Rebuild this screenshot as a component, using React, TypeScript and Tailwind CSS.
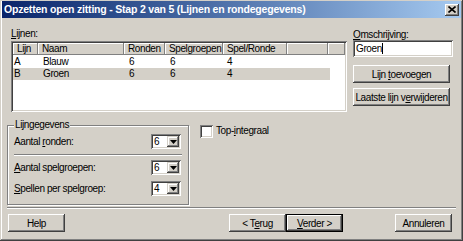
import React from 'react';

const font = { fontFamily: '"Liberation Sans", Arial, sans-serif', letterSpacing: '-0.4px' };

const raised =
  'bg-[#d4d0c8] shadow-[inset_-1px_-1px_0_#404040,inset_1px_1px_0_#ffffff,inset_-2px_-2px_0_#808080,inset_2px_2px_0_#d4d0c8]';
const sunken =
  'bg-white shadow-[inset_1px_1px_0_#808080,inset_-1px_-1px_0_#ffffff,inset_2px_2px_0_#404040,inset_-2px_-2px_0_#d4d0c8]';

function Btn({ label, u, className = '', def = false }: { label: string; u?: number; className?: string; def?: boolean }) {
  const parts =
    u === undefined ? [label] : [label.slice(0, u), label.slice(u, u + 1), label.slice(u + 1)];
  return (
    <div
      className={`flex items-center justify-center h-[18px] text-[10px] text-black whitespace-nowrap ${
        def
          ? 'bg-[#d4d0c8] shadow-[inset_0_0_0_1px_#000000,inset_-2px_-2px_0_#404040,inset_2px_2px_0_#ffffff,inset_-3px_-3px_0_#808080]'
          : raised
      } ${className}`}
    >
      {u === undefined ? (
        label
      ) : (
        <span>
          {parts[0]}
          <span className="underline">{parts[1]}</span>
          {parts[2]}
        </span>
      )}
    </div>
  );
}

function Combo({ value }: { value: string }) {
  return (
    <div className={`flex w-[30px] h-[15px] p-[2px] ${sunken}`}>
      <div className="flex-1 text-[10px] leading-[11px] pl-[1px]">{value}</div>
      <div className="w-[12px] h-[11px] flex items-center justify-center bg-[#d4d0c8] shadow-[inset_-1px_-1px_0_#404040,inset_1px_1px_0_#d4d0c8,inset_-2px_-2px_0_#808080,inset_2px_2px_0_#ffffff]">
        <svg width="7" height="4" viewBox="0 0 7 4">
          <path d="M0 0h7L3.5 4z" fill="#000" />
        </svg>
      </div>
    </div>
  );
}

const cols = [
  { name: 'Lijn', w: 25 },
  { name: 'Naam', w: 86 },
  { name: 'Ronden', w: 41 },
  { name: 'Spelgroepen', w: 58 },
  { name: 'Spel/Ronde', w: 64 },
  { name: '', w: 41 },
];

const rows = [
  { id: 'A', naam: 'Blauw', ronden: '6', groepen: '6', spel: '4', sel: false },
  { id: 'B', naam: 'Groen', ronden: '6', groepen: '6', spel: '4', sel: true },
];

export default function App() {
  return (
    <div
      style={font}
      className="w-[463px] h-[241px] bg-[#d4d0c8] text-black text-[10px] flex flex-col px-[2px] pt-[1px] shadow-[inset_-1px_-1px_0_#404040,inset_1px_1px_0_#d4d0c8,inset_-2px_-2px_0_#808080,inset_2px_2px_0_#ffffff] overflow-hidden"
    >
      {/* title bar */}
      <div className="h-[17px] flex items-center justify-between bg-gradient-to-r from-[#0a246a] to-[#a6caf0] pl-[2px] pr-[2px]">
        <span className="text-white font-bold text-[10.5px] tracking-[-0.2px]">
          Opzetten open zitting - Stap 2 van 5 (Lijnen en rondegegevens)
        </span>
        <div className={`w-[14px] h-[12px] flex items-center justify-center ${raised}`}>
          <svg width="8" height="7" viewBox="0 0 8 7">
            <path d="M0.5 0.5l7 6M7.5 0.5l-7 6" stroke="#000" strokeWidth="1.6" />
          </svg>
        </div>
      </div>

      {/* top row */}
      <div className="flex mt-[10px]">
        <div className="ml-[9px] w-[336px] flex flex-col">
          <div className="h-[13px] leading-[11px]">
            <span className="underline">L</span>ijnen:
          </div>
          <div className={`h-[71px] p-[2px] ${sunken}`}>
            <div className="flex h-[12px]">
              {cols.map((c, i) => (
                <div
                  key={i}
                  style={{ width: c.w }}
                  className="pl-[4px] leading-[11px] whitespace-nowrap overflow-hidden bg-[#d4d0c8] shadow-[inset_-1px_-1px_0_#808080,inset_1px_1px_0_#ffffff]"
                >
                  {c.name}
                </div>
              ))}
              <div className="flex-1 bg-[#d4d0c8] shadow-[inset_-1px_-1px_0_#808080,inset_1px_1px_0_#ffffff]" />
            </div>
            <div className="mt-[1px]">
              {rows.map((r) => (
                <div key={r.id} className={`flex h-[12px] leading-[12px] w-[317px] ${r.sel ? 'bg-[#d4d0c8]' : ''}`}>
                  <div style={{ width: cols[0].w }} className="pl-[1px]">{r.id}</div>
                  <div style={{ width: cols[1].w }} className="pl-[5px]">{r.naam}</div>
                  <div style={{ width: cols[2].w }} className="pl-[5px]">{r.ronden}</div>
                  <div style={{ width: cols[3].w }} className="pl-[5px]">{r.groepen}</div>
                  <div style={{ width: cols[4].w }} className="pl-[4px]">{r.spel}</div>
                </div>
              ))}
            </div>
          </div>
        </div>

        <div className="ml-[6px] w-[100px] flex flex-col">
          <div className="h-[12px] leading-[13px]">
            <span className="underline">O</span>mschrijving:
          </div>
          <div className={`h-[17px] px-[3px] flex items-center ${sunken}`}>
            <span>Groen</span>
            <span className="w-px h-[11px] bg-black" />
          </div>
          <Btn label="Lijn toevoegen" u={5} className="mt-[8px] w-[97px]" />
          <Btn label="Laatste lijn verwijderen" u={14} className="mt-[5px] w-[97px]" />
        </div>
      </div>

      {/* middle row */}
      <div className="flex mt-[7px]">
        <fieldset className="ml-[5px] w-[182px] h-[86px] border border-[#808080] shadow-[1px_1px_0_#ffffff,inset_1px_1px_0_#ffffff] px-[6px] pt-0 pb-0 m-0">
          <legend className="px-[1px] ml-0 bg-[#d4d0c8] leading-[12px]">Lijngegevens</legend>
          <div className="flex items-center justify-between h-[15px] mt-[3px] pr-[1px]">
            <span>
              Aantal <span className="underline">r</span>onden:
            </span>
            <Combo value="6" />
          </div>
          <div className="h-[2px] mt-[5px] border-t border-[#808080] border-b border-b-white" />
          <div className="flex items-center justify-between h-[15px] mt-[4px] pr-[1px]">
            <span>
              <span className="underline">A</span>antal spelgroepen:
            </span>
            <Combo value="6" />
          </div>
          <div className="flex items-center justify-between h-[15px] mt-[6px] pr-[1px]">
            <span>
              <span className="underline">S</span>pellen per spelgroep:
            </span>
            <Combo value="4" />
          </div>
        </fieldset>

        <div className="ml-[11px] mt-[6px] flex items-start h-[13px]">
          <div className={`w-[13px] h-[13px] ${sunken}`} />
          <span className="ml-[3px] leading-[12px]">
            Top-<span className="underline">i</span>ntegraal
          </span>
        </div>
      </div>

      {/* separator */}
      <div className="ml-[5px] mr-[5px] mt-[2px] h-[2px] border-t border-[#808080] border-b border-b-white" />

      {/* bottom buttons */}
      <div className="flex mt-[5px]">
        <Btn label="Help" className="ml-[6px] w-[57px]" />
        <Btn label="< Terug" u={3} className="ml-[164px] w-[57px]" />
        <Btn label="Verder >" u={0} def className="w-[57px]" />
        <Btn label="Annuleren" className="ml-[52px] w-[57px]" />
      </div>
    </div>
  );
}
